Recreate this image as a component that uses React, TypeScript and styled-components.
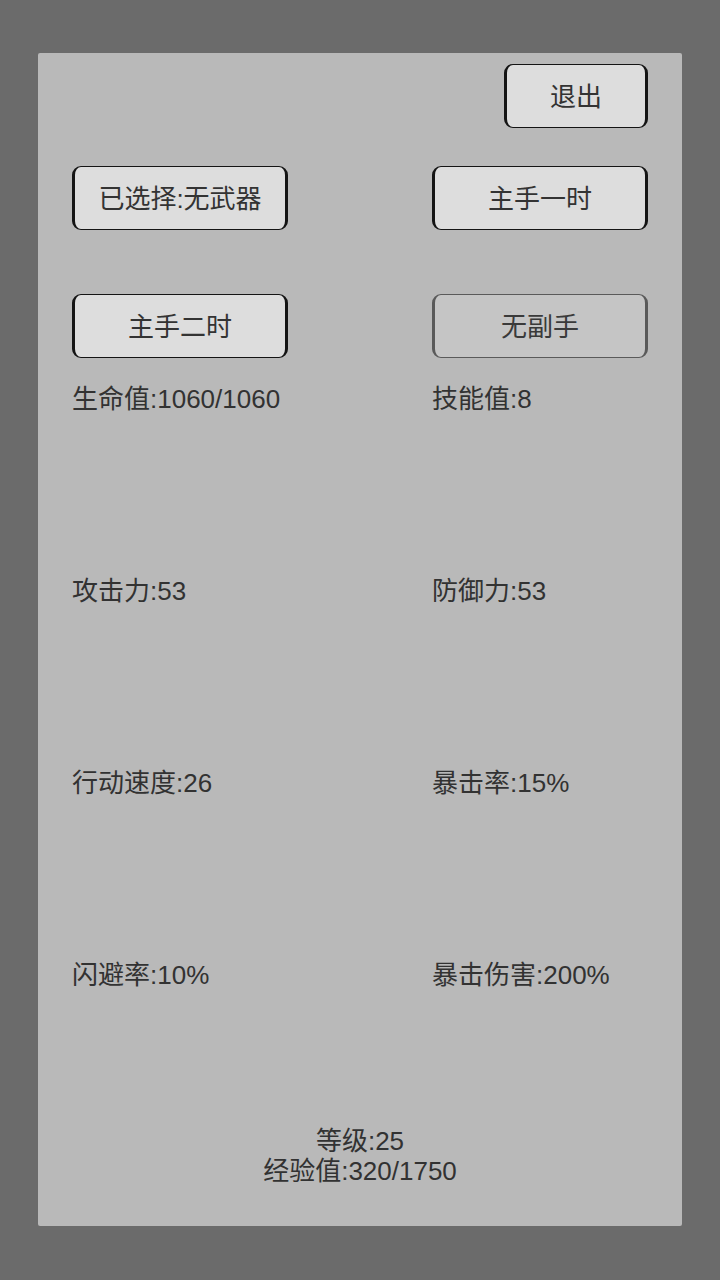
import React from 'react';
import styled, { createGlobalStyle } from 'styled-components';

const GlobalStyle = createGlobalStyle`
    html, body {
        margin: 0;
        padding: 0;
        background: #6b6b6b;
    }
    body {
        font-family: "Liberation Sans", "Noto Sans CJK SC", sans-serif;
    }
`;

const Screen = styled.div`
    width: 720px;
    height: 1280px;
    padding: 53px 38px 54px;
    box-sizing: border-box;
`;

const Panel = styled.div`
    height: 100%;
    box-sizing: border-box;
    background: #b9b9b9;
    border-radius: 2px;
    padding: 11px 34px 40px;
    display: flex;
    flex-direction: column;
    color: #323232;
`;

const TopBar = styled.div`
    display: flex;
    justify-content: flex-end;
`;

const ButtonGrid = styled.div`
    display: grid;
    grid-template-columns: 360px 216px;
    row-gap: 64px;
    margin-top: 38px;
`;

interface ButtonProps {
    disabled?: boolean;
    wide?: boolean;
}

const Button = styled.div<ButtonProps>`
    width: ${p => (p.wide ? '216px' : '144px')};
    height: 64px;
    box-sizing: border-box;
    display: flex;
    align-items: center;
    justify-content: center;
    padding-bottom: 3px;
    border-radius: 9px;
    border-style: solid;
    border-width: 1px 3px;
    border-color: ${p => (p.disabled ? '#5a5a5a' : '#141414')};
    background: ${p => (p.disabled ? '#c5c5c5' : '#dddddd')};
    color: ${p => (p.disabled ? '#3a3a3a' : '#333333')};
    font-size: 26px;
`;

const StatGrid = styled.div`
    display: grid;
    grid-template-columns: 360px 216px;
    grid-auto-rows: 30px;
    row-gap: 162px;
    margin-top: 26px;
`;

const Stat = styled.div`
    font-size: 26px;
    line-height: 30px;
    white-space: nowrap;
`;

const Footer = styled.div`
    margin-top: auto;
    text-align: center;
    font-size: 26px;
    line-height: 30px;
`;

const stats = [
    '生命值:1060/1060',
    '技能值:8',
    '攻击力:53',
    '防御力:53',
    '行动速度:26',
    '暴击率:15%',
    '闪避率:10%',
    '暴击伤害:200%',
];

export default function App() {
    return (
        <Screen>
            <GlobalStyle />
            <Panel>
                <TopBar>
                    <Button>退出</Button>
                </TopBar>
                <ButtonGrid>
                    <Button wide>已选择:无武器</Button>
                    <Button wide>主手一时</Button>
                    <Button wide>主手二时</Button>
                    <Button wide disabled>无副手</Button>
                </ButtonGrid>
                <StatGrid>
                    {stats.map(s => (
                        <Stat key={s}>{s}</Stat>
                    ))}
                </StatGrid>
                <Footer>
                    <div>等级:25</div>
                    <div>经验值:320/1750</div>
                </Footer>
            </Panel>
        </Screen>
    );
}
